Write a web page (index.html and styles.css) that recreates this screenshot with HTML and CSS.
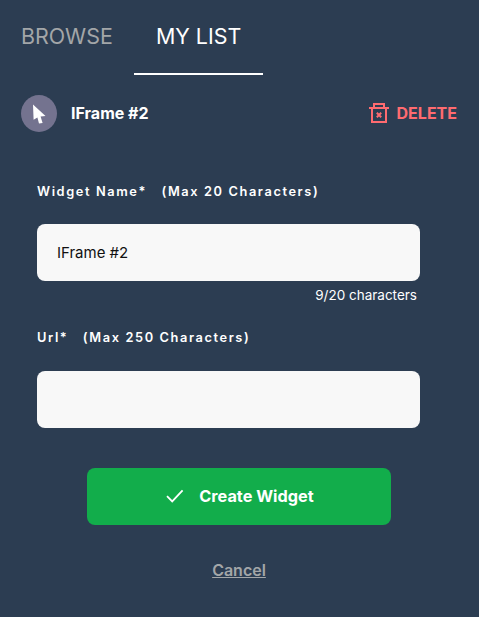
FILE: index.html
```html
<!DOCTYPE html>
<html lang="en">
  <head>
    <meta charset="UTF-8" />
    <meta name="viewport" content="width=device-width, initial-scale=1.0" />
    <title>Widgets</title>
    <link rel="stylesheet" href="styles.css">
  </head>
  <body>
    <nav class="tabs">
      <a class="tab" href="#">BROWSE</a>
      <a class="tab tab-active" href="#">MY LIST</a>
    </nav>

    <div class="widget-row">
      <span class="widget-icon">
        <svg width="16" height="22" viewBox="0 0 16 22">
          <path d="M2 1.5 L14.5 13 L9.6 13.4 L11.6 20 L8 20.6 L6.4 14.4 L2.6 16.8 Z" fill="#fff" />
        </svg>
      </span>
      <span class="widget-name">IFrame #2</span>
      <a class="delete" href="#">
        <svg width="20" height="20" viewBox="0 0 20 20" fill="none" stroke="#ff6b70" stroke-width="2">
          <path d="M0 5 H20 M5 5 V1 H15 V5 M3 5 V19 H17 V5" />
          <path d="M7.8 9.8 L12.2 14.2 M12.2 9.8 L7.8 14.2" />
        </svg>
        DELETE
      </a>
    </div>

    <form class="widget-form">
      <div class="form-row">
        <label class="form-label">Widget Name*&nbsp;&nbsp; (Max 20 Characters)</label>
        <input class="form-input" type="text" value="IFrame #2" />
        <div class="form-helper">9/20 characters</div>
      </div>
      <div class="form-row">
        <label class="form-label">Url*&nbsp;&nbsp; (Max 250 Characters)</label>
        <input class="form-input" type="text" />
      </div>
      <button class="btn-create" type="button">
        <svg width="18" height="14" viewBox="0 0 18 14" fill="none" stroke="#fff" stroke-width="1.8">
          <path d="M1 7.2 L6.2 12.4 L16.6 1.4" />
        </svg>
        Create Widget
      </button>
      <a class="cancel" href="#">Cancel</a>
    </form>
  </body>
</html>
```

FILE: styles.css
```css
body {
  margin: 0;
  min-height: 617px;
  background-color: #2c3d52;
  font-family: Inter, "Liberation Sans", sans-serif;
  color: #fff;
}

a {
  text-decoration: none;
  color: inherit;
}

.tabs {
  display: flex;
  height: 75px;
}

.tab {
  width: 134px;
  box-sizing: border-box;
  padding: 22px 0 0 21px;
  font-size: 21.4px;
  line-height: 28px;
  color: #a3a6a8;
}

.tab-active {
  width: 129px;
  padding-left: 22px;
  color: #fff;
  border-bottom: 2px solid #fff;
}

.widget-row {
  display: flex;
  align-items: center;
  margin-top: 20px;
  padding: 0 22px 0 21px;
  height: 37px;
}

.widget-icon {
  display: flex;
  align-items: center;
  justify-content: center;
  width: 36px;
  height: 37px;
  border-radius: 50%;
  background-color: #74738f;
}

.widget-name {
  margin: 0 0 2px 14px;
  font-size: 16px;
  font-weight: 700;
}

.delete {
  display: flex;
  align-items: center;
  gap: 8px;
  margin: 0 0 2px auto;
  font-size: 16px;
  font-weight: 700;
  color: #ff6b70;
}

.widget-form {
  padding: 52px 59px 0 37px;
}

.form-row {
  margin-bottom: 40px;
}

.form-row:first-child {
  margin-bottom: 27px;
}

.form-label {
  display: block;
  margin-bottom: 25px;
  font-size: 12.8px;
  line-height: 15px;
  font-weight: 600;
  letter-spacing: 1.6px;
  color: #fff;
}

.form-row + .form-row .form-label {
  margin-bottom: 26px;
}

.form-input {
  display: block;
  box-sizing: border-box;
  width: 100%;
  height: 57px;
  padding: 0 20px;
  border: 0;
  border-radius: 8px;
  background-color: #f8f8f8;
  font-family: inherit;
  font-size: 15px;
  color: #111;
}

.form-helper {
  margin-top: 7px;
  padding-right: 3px;
  text-align: right;
  font-size: 13.5px;
  line-height: 15px;
}

.btn-create {
  display: flex;
  align-items: center;
  justify-content: center;
  gap: 15px;
  width: 304px;
  height: 57px;
  margin-left: 50px;
  padding: 0 0 2px 2px;
  border: 0;
  border-radius: 8px;
  background-color: #12ad4b;
  font-family: inherit;
  font-size: 16.3px;
  font-weight: 700;
  color: #fff;
}

.cancel {
  display: block;
  width: 304px;
  margin: 35px 0 0 50px;
  text-align: center;
  font-size: 16px;
  line-height: 20px;
  font-weight: 600;
  text-decoration: underline;
  color: #a3a6a8;
}
```
